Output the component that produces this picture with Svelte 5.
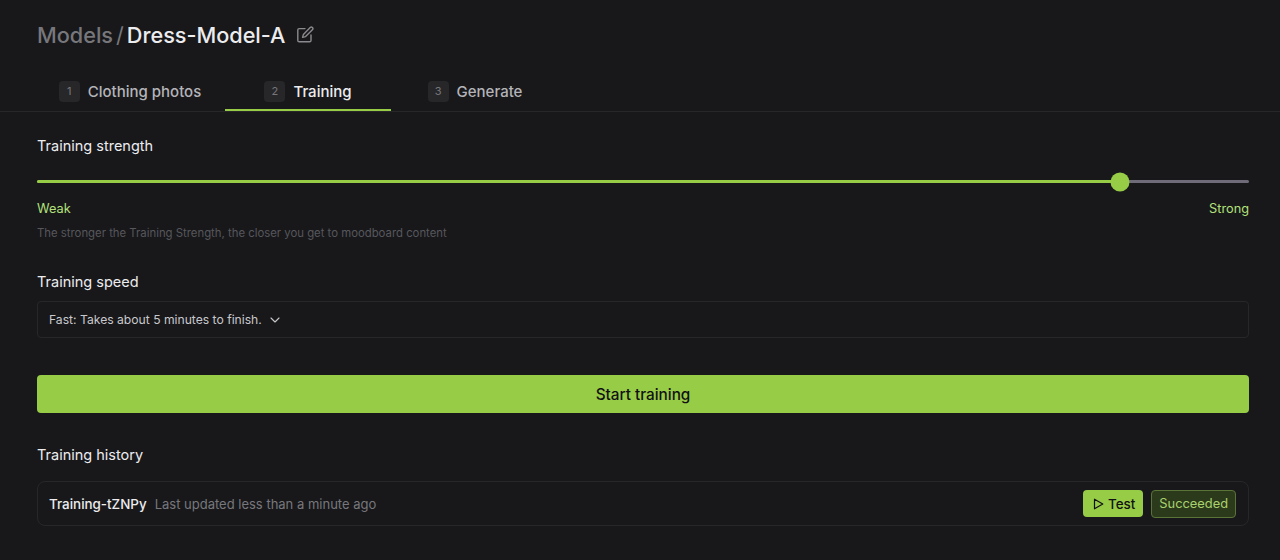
<script lang="ts">
  const tabs = [
    { n: 1, label: 'Clothing photos', width: 188 },
    { n: 2, label: 'Training', width: 166, active: true },
    { n: 3, label: 'Generate', width: 168 }
  ];
  let strength = $state(89.37);
</script>

<div class="page">
  <header class="title">
    <span class="crumb">Models</span>
    <span class="slash">/</span>
    <h1>Dress-Model-A</h1>
    <svg class="edit" width="18" height="18" viewBox="0 0 18 18" fill="none" stroke="currentColor" stroke-width="1.4" stroke-linecap="round" stroke-linejoin="round">
      <path d="M9 2.6H3.2a1.4 1.4 0 0 0-1.4 1.4v10.4a1.4 1.4 0 0 0 1.4 1.4h10.4a1.4 1.4 0 0 0 1.4-1.4V9" />
      <path d="M14.2 1.6a1.5 1.5 0 0 1 2.2 2.2L9.6 10.6l-3 .8.8-3z" />
    </svg>
  </header>

  <nav class="tabs">
    {#each tabs as tab}
      <div class="tab" class:active={tab.active} style="width: {tab.width}px">
        <span class="num">{tab.n}</span>
        <span>{tab.label}</span>
      </div>
    {/each}
  </nav>

  <main class="content">
    <section class="strength">
      <h2>Training strength</h2>
      <div class="slider">
        <div class="fill" style="width: {strength}%"></div>
        <div class="thumb" style="left: {strength}%"></div>
      </div>
      <div class="ends">
        <span>Weak</span>
        <span>Strong</span>
      </div>
      <p class="hint">The stronger the Training Strength, the closer you get to moodboard content</p>
    </section>

    <section class="speed">
      <h2>Training speed</h2>
      <div class="select">
        <span>Fast: Takes about 5 minutes to finish.</span>
        <svg width="10" height="6" viewBox="0 0 10 6" fill="none" stroke="currentColor" stroke-width="1.1" stroke-linecap="round" stroke-linejoin="round">
          <path d="M1 1l4 4 4-4" />
        </svg>
      </div>
    </section>

    <button type="button" class="start">Start training</button>

    <section class="history">
      <h2>Training history</h2>
      <div class="row">
        <span class="name">Training-tZNPy</span>
        <span class="updated">Last updated less than a minute ago</span>
        <button type="button" class="test">
          <svg width="11" height="12" viewBox="0 0 11 12" fill="none" stroke="currentColor" stroke-width="1.2" stroke-linejoin="round">
            <path d="M1.5 1.2v9.6L9.8 6z" />
          </svg>
          Test
        </button>
        <span class="status">Succeeded</span>
      </div>
    </section>
  </main>
</div>

<style>
  :global(body) {
    margin: 0;
    background: #18181b;
  }
  .page {
    height: 560px;
    overflow: hidden;
    background: #18181b;
    color: #ececee;
    font-family: Inter, "Noto Sans", sans-serif;
  }
  .title {
    display: flex;
    align-items: center;
    height: 32px;
    padding: 19px 37px 0;
    font-size: 21.65px;
    font-weight: 500;
    line-height: 32px;
  }
  .crumb { color: #77777b; }
  .slash { color: #77777b; margin: 0 3px; font-weight: 400; }
  h1 {
    margin: 0;
    font: inherit;
    color: #ececee;
  }
  .edit { color: #8a8a8e; margin-left: 11px; }
  .tabs {
    display: flex;
    height: 40px;
    margin-top: 20px;
    padding: 0 37px;
    border-bottom: 1px solid #27272a;
  }
  .tab {
    display: flex;
    align-items: center;
    justify-content: center;
    gap: 8px;
    height: 40px;
    box-sizing: border-box;
    padding-top: 2px;
    color: #b4b4b8;
    font-size: 15px;
    font-weight: 500;
    border-bottom: 2px solid transparent;
  }
  .tab:first-child { padding-right: 2px; }
  .tab.active {
    color: #ececee;
    border-bottom-color: #97cc47;
  }
  .num {
    display: grid;
    place-items: center;
    width: 21px;
    height: 21px;
    border-radius: 4px;
    background: #27272a;
    color: #77777b;
    font-size: 11px;
    font-weight: 400;
  }
  .content {
    padding: 0 31px 0 37px;
  }
  h2 {
    margin: 0;
    font-size: 14.5px;
    font-weight: 400;
    line-height: 20px;
    color: #ececee;
  }
  .strength { padding-top: 24px; }
  .slider {
    position: relative;
    height: 3px;
    margin-top: 24px;
    border-radius: 2px;
    background: #6f6b78;
  }
  .fill {
    height: 100%;
    border-radius: 2px;
    background: #97cc47;
  }
  .thumb {
    position: absolute;
    top: 50%;
    width: 19px;
    height: 19px;
    border-radius: 50%;
    background: #97cc47;
    transform: translate(-50%, -50%);
  }
  .ends {
    display: flex;
    justify-content: space-between;
    margin-top: 17px;
    color: #b3e07a;
    font-size: 12.75px;
    line-height: 18px;
  }
  .hint {
    margin: 6px 0 0;
    color: #57575b;
    font-size: 11.35px;
    line-height: 18px;
  }
  .speed { padding-top: 30px; }
  .select {
    display: flex;
    align-items: center;
    gap: 8px;
    box-sizing: border-box;
    height: 37px;
    margin-top: 9px;
    padding: 0 11px;
    border: 1px solid #27272a;
    border-radius: 4px;
    color: #c8c8cc;
    font-size: 12.15px;
  }
  .start {
    display: block;
    width: 100%;
    height: 38px;
    margin-top: 37px;
    border: 0;
    border-radius: 4px;
    background: #97cc47;
    color: #111113;
    font: 500 15.3px Inter, sans-serif;
  }
  .history { padding-top: 32px; }
  .row {
    display: flex;
    align-items: center;
    box-sizing: border-box;
    height: 45px;
    margin-top: 16px;
    padding: 0 12px 0 11px;
    border: 1px solid #27272a;
    border-radius: 8px;
  }
  .name {
    color: #ececee;
    font-size: 13.4px;
    font-weight: 500;
  }
  .updated {
    flex: 1;
    margin-left: 8px;
    color: #77777b;
    font-size: 13px;
  }
  .test {
    display: flex;
    align-items: center;
    gap: 4px;
    height: 27px;
    margin-right: 8px;
    padding: 0 8px 0 10px;
    border: 0;
    border-radius: 4px;
    background: #97cc47;
    color: #111113;
    font: 500 13.4px Inter, sans-serif;
  }
  .status {
    display: grid;
    place-items: center;
    box-sizing: border-box;
    height: 28px;
    padding: 0 7px;
    border: 1px solid #5a7337;
    border-radius: 4px;
    background: #2c3a1c;
    color: #a9d26c;
    font-size: 12.85px;
  }
</style>
